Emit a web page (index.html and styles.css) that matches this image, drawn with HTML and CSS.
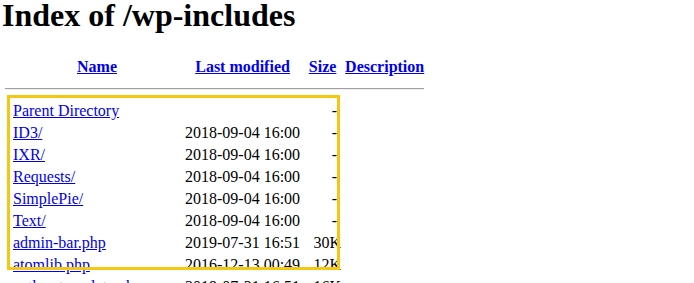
FILE: index.html
```html
<!DOCTYPE html>
<html>
<head>
<meta charset="utf-8">
<title>Index of /wp-includes</title>
<link rel="stylesheet" href="styles.css">
</head>
<body>
<h1 class="title">Index of /wp-includes</h1>
<table class="listing">
  <tr>
    <th class="c-ico"></th>
    <th class="c-name"><a href="#">Name</a></th>
    <th class="c-date"><a href="#">Last modified</a></th>
    <th class="c-size"><a href="#">Size</a></th>
    <th class="c-desc"><a href="#">Description</a></th>
  </tr>
  <tr><th colspan="5" class="rule-cell"><hr class="rule"></th></tr>
  <tr><td></td><td><a href="#">Parent Directory</a></td><td>&nbsp;</td><td class="size">-&nbsp;</td><td>&nbsp;</td></tr>
  <tr><td></td><td><a href="#">ID3/</a></td><td>2018-09-04 16:00</td><td class="size">-&nbsp;</td><td>&nbsp;</td></tr>
  <tr><td></td><td><a href="#">IXR/</a></td><td>2018-09-04 16:00</td><td class="size">-&nbsp;</td><td>&nbsp;</td></tr>
  <tr><td></td><td><a href="#">Requests/</a></td><td>2018-09-04 16:00</td><td class="size">-&nbsp;</td><td>&nbsp;</td></tr>
  <tr><td></td><td><a href="#">SimplePie/</a></td><td>2018-09-04 16:00</td><td class="size">-&nbsp;</td><td>&nbsp;</td></tr>
  <tr><td></td><td><a href="#">Text/</a></td><td>2018-09-04 16:00</td><td class="size">-&nbsp;</td><td>&nbsp;</td></tr>
  <tr><td></td><td><a href="#">admin-bar.php</a></td><td>2019-07-31 16:51</td><td class="size">30K</td><td>&nbsp;</td></tr>
  <tr><td></td><td><a href="#">atomlib.php</a></td><td>2016-12-13 00:49</td><td class="size">12K</td><td>&nbsp;</td></tr>
  <tr><td></td><td><a href="#">author-template.php</a></td><td>2019-07-31 16:51</td><td class="size">16K</td><td>&nbsp;</td></tr>
  <tr><td></td><td><a href="#">blocks.php</a></td><td>2019-07-31 16:51</td><td class="size">10K</td><td>&nbsp;</td></tr>
</table>
<div class="highlight"></div>
</body>
</html>
```
FILE: styles.css
```css
html, body {
  background: #ffffff;
}
body {
  margin: 0 2px;
  font-family: "Liberation Serif", "Times New Roman", serif;
  font-size: 16px;
  color: #000000;
  position: relative;
}
a {
  color: #0000ee;
}
.title {
  font-size: 32px;
  font-weight: bold;
  margin: -3px 0 21px 0;
}
.listing {
  border-spacing: 2px;
  white-space: nowrap;
}
.listing th,
.listing td {
  padding: 1px;
}
.c-ico { width: 4px; }
.c-name { width: 168px; }
.c-date { width: 114px; }
.c-size { width: 37px; }
.c-desc { width: 78px; }
.size {
  text-align: right;
}
.rule {
  margin: 8px 0;
  border: 0;
  border-top: 1px solid #a0a0a0;
  border-bottom: 1px solid #eeeeee;
}
.highlight {
  position: absolute;
  left: 5px;
  top: 95px;
  width: 333px;
  height: 175px;
  box-sizing: border-box;
  border: 3px solid #f3c80f;
}
```
